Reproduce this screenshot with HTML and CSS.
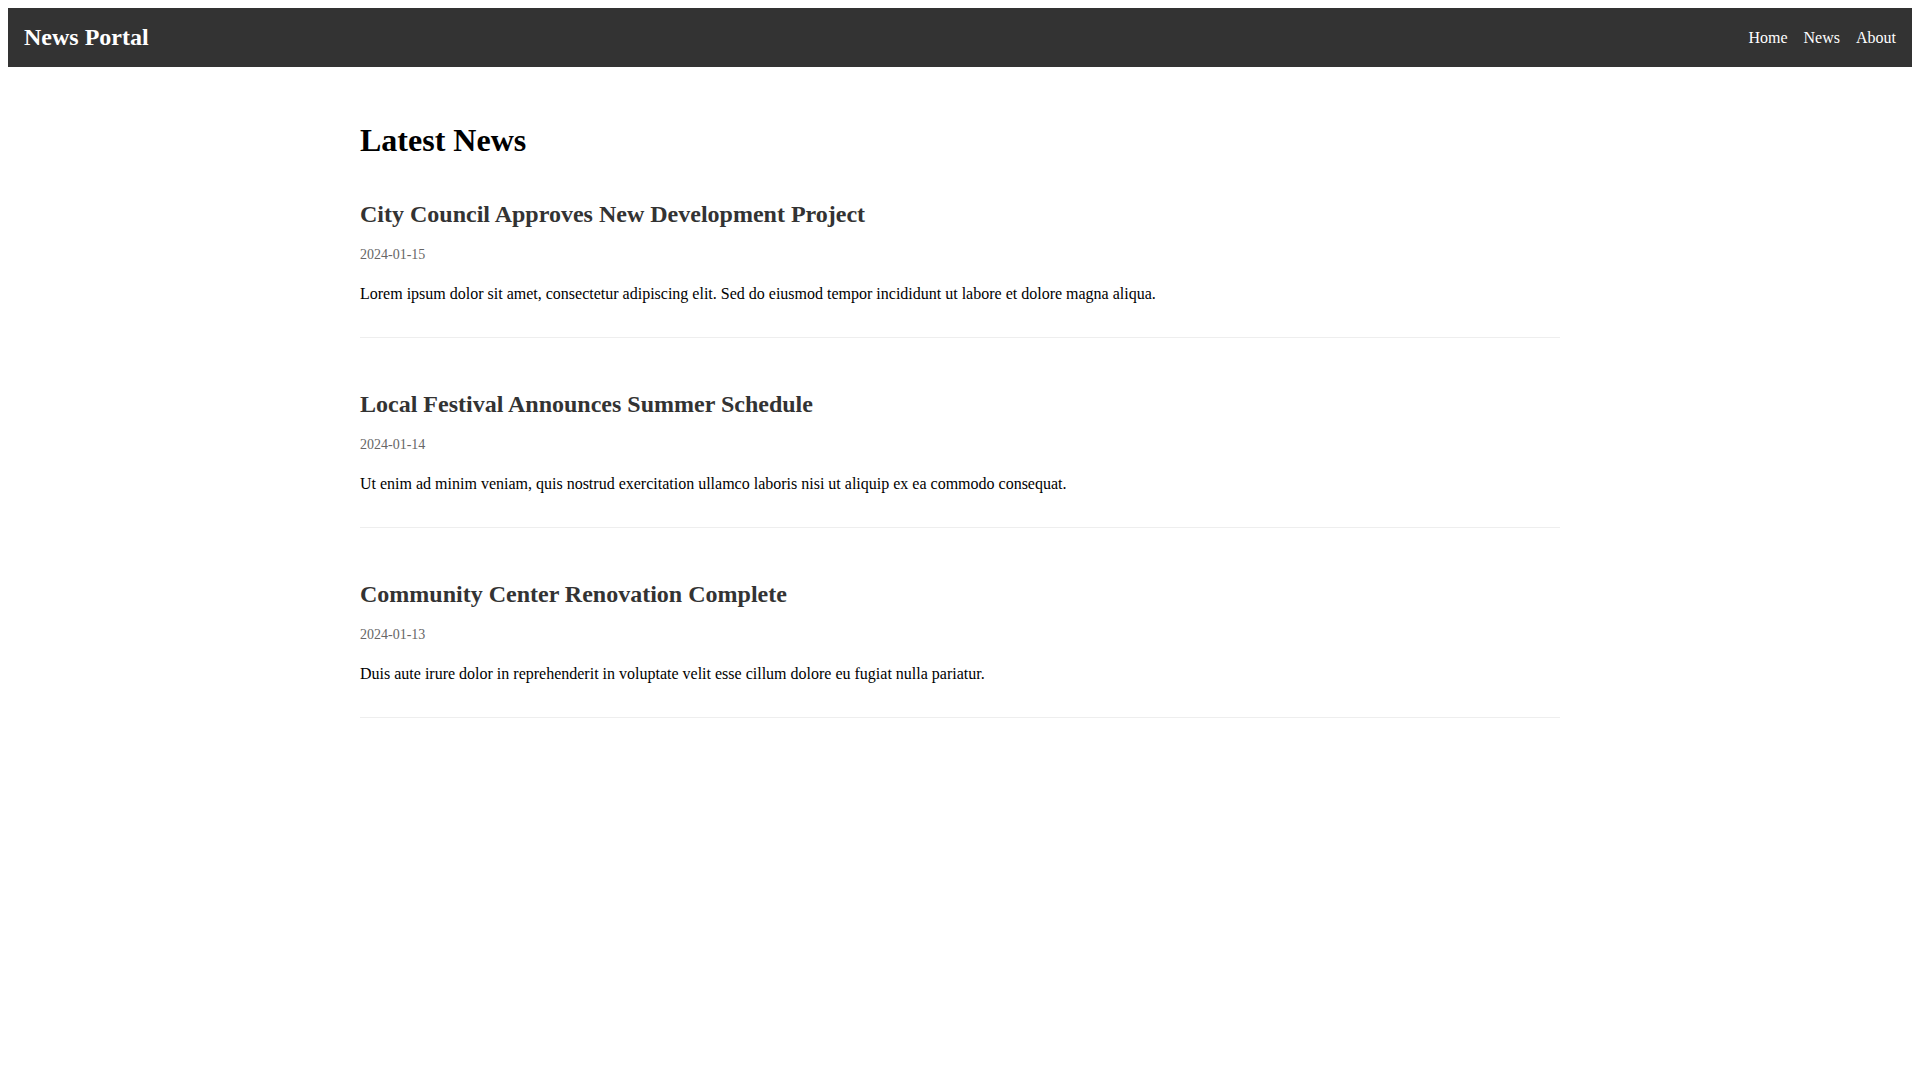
FILE: index.html
```html
<!DOCTYPE html>
<html lang="en">
<head>
<meta charset="utf-8">
<title>News Portal</title>
<link rel="stylesheet" href="styles.css">
</head>
<body>
<header class="site-header">
  <div class="logo">News Portal</div>
  <nav class="nav">
    <a href="#">Home</a>
    <a href="#">News</a>
    <a href="#">About</a>
  </nav>
</header>
<main class="content">
  <h1 class="page-title">Latest News</h1>
  <article class="article">
    <h2 class="article-title">City Council Approves New Development Project</h2>
    <p class="article-date">2024-01-15</p>
    <p class="article-text">Lorem ipsum dolor sit amet, consectetur adipiscing elit. Sed do eiusmod tempor incididunt ut labore et dolore magna aliqua.</p>
  </article>
  <article class="article">
    <h2 class="article-title">Local Festival Announces Summer Schedule</h2>
    <p class="article-date">2024-01-14</p>
    <p class="article-text">Ut enim ad minim veniam, quis nostrud exercitation ullamco laboris nisi ut aliquip ex ea commodo consequat.</p>
  </article>
  <article class="article">
    <h2 class="article-title">Community Center Renovation Complete</h2>
    <p class="article-date">2024-01-13</p>
    <p class="article-text">Duis aute irure dolor in reprehenderit in voluptate velit esse cillum dolore eu fugiat nulla pariatur.</p>
  </article>
</main>
</body>
</html>
```
FILE: styles.css
```css
body {
  margin: 8px;
  font-family: "Liberation Serif", "Times New Roman", serif;
  font-size: 16px;
  color: #000;
  background: #fff;
}

.site-header {
  display: flex;
  align-items: center;
  justify-content: space-between;
  background: #333;
  color: #fff;
  padding: 16px;
}

.logo {
  font-size: 24px;
  font-weight: bold;
}

.nav {
  display: flex;
  gap: 16px;
}

.nav a {
  color: #fff;
  text-decoration: none;
  font-size: 16px;
}

.content {
  max-width: 1200px;
  margin: 0 auto;
}

.page-title {
  font-size: 32px;
  font-weight: bold;
  margin: 55px 0 41.5px;
}

.article {
  padding-bottom: 34px;
  margin-bottom: 52.6px;
  border-bottom: 1px solid #eee;
}

.article-title {
  font-size: 24px;
  font-weight: bold;
  color: #333;
  margin: 0 0 19.5px;
}

.article-date {
  font-size: 14px;
  color: #666;
  margin: 0 0 22px;
}

.article-text {
  margin: 0;
}
```
